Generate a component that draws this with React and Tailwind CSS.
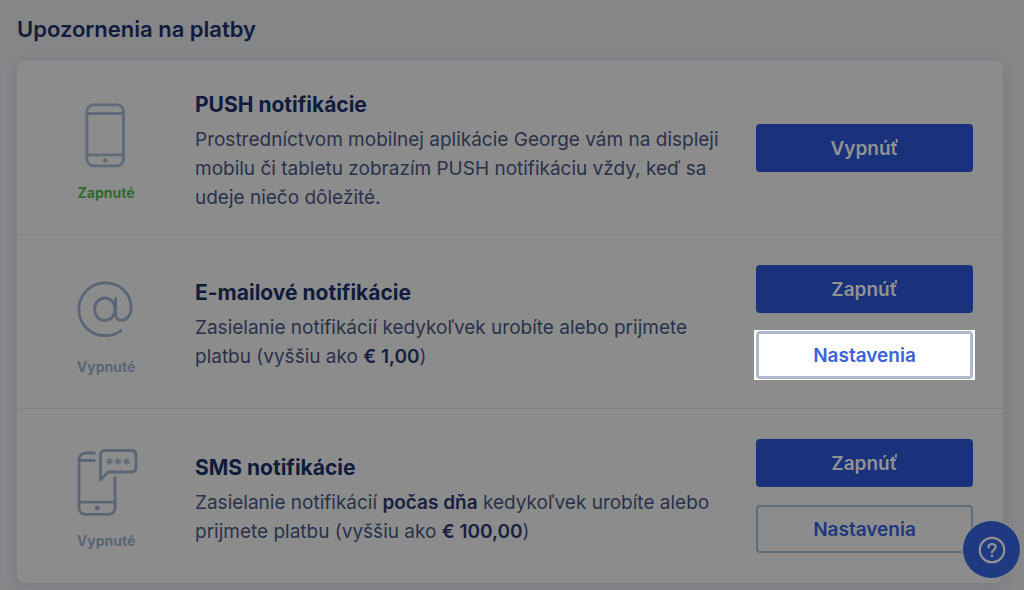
import React from "react";

function PhoneIcon() {
  return (
    <svg viewBox="0 0 64 68" className="h-[68px] w-16" fill="none" stroke="#5f6b7a" strokeWidth="2.8" aria-hidden="true">
      <rect x="13" y="3.8" width="36.500" height="61" rx="6.5" />
      <path d="M13 12.500h36.500M13 53.800h36.500" />
      <circle cx="31.300" cy="59.300" r="2.3" fill="#5f6b7a" stroke="none" />
    </svg>
  );
}

function AtIcon() {
  return (
    <svg viewBox="0 0 64 68" className="h-[68px] w-16" fill="none" stroke="#5a6675" strokeWidth="2.8" strokeLinecap="round" aria-hidden="true">
      <ellipse cx="30.8" cy="34.300" rx="10.3" ry="11.3" />
      <path d="M41.6 23.500v15.500c0 4.200 2.200 6.200 5.800 6.200 6 0 9.700-5.500 9.700-12.200C57.100 18 45.500 7.900 31.300 7.900 16.300 7.900 4.900 19.600 4.900 34.500S16.300 60.600 31.300 60.600c6 0 11.200-1.600 15.700-5" />
    </svg>
  );
}

function SmsIcon() {
  return (
    <svg viewBox="0 0 64 68" className="h-[68px] w-16" fill="none" stroke="#5a6675" strokeWidth="2.8" aria-hidden="true">
      <path d="M21.500 4H12c-4.200 0-7 2.800-7 7v48c0 4 2.800 6.300 7 6.300h22c4.200 0 7-2.300 7-6.300V27.500" />
      <path d="M5 11.500h16.500M5 53.200h36" />
      <circle cx="23.300" cy="59" r="2.400" fill="#5a6675" stroke="none" />
      <path d="M30.500 1.500h27c2.800 0 4.500 1.700 4.500 4.500v12.500c0 2.800-1.700 4.500-4.500 4.500H34l-7.500 8V6c0-2.800 1.500-4.500 4-4.500z" strokeLinejoin="round" />
      <path
        d="M35.500 9v7M32.500 10.800l6 3.400M38.500 10.800l-6 3.400M44 9v7M41 10.800l6 3.400M47 10.800l-6 3.400M52.500 9v7M49.500 10.800l6 3.400M55.500 10.800l-6 3.400"
        strokeWidth="1.400"
      />
    </svg>
  );
}

function PrimaryButton({ children }) {
  return (
    <button type="button" className="h-12 w-full rounded bg-[#19327b] pt-[3px] text-[19px] font-semibold text-[#929292]">
      {children}
    </button>
  );
}

function SettingsButton({ highlighted }) {
  if (highlighted) {
    return (
      <div className="-mx-0.5 -my-px bg-white px-0.5 py-px">
        <button type="button" className="h-12 w-full rounded border-[3px] border-[#adb9cb] bg-white pt-[3px] text-[19px] font-semibold text-[#3a62dc]">
          Nastavenia
        </button>
      </div>
    );
  }
  return (
    <button type="button" className="h-12 w-full rounded border-2 border-[#606b7a] pt-[3px] text-[19px] font-semibold text-[#20377f]">
      Nastavenia
    </button>
  );
}

function NotificationRow({ icon, status, statusClass, title, children, actions }) {
  return (
    <li className="flex min-h-[174px] items-center pr-[30px]">
      <div className="flex w-[178px] shrink-0 flex-col items-center gap-3.5 pt-2">
        {icon}
        <span className={`text-sm leading-5 font-bold ${statusClass}`}>{status}</span>
      </div>
      <div className="min-w-0 flex-1 pt-[7px] pr-6">
        <h3 className="text-[21px] leading-7 font-bold text-[#101b3e]">{title}</h3>
        <p className="mt-1.5 text-[19px] leading-[29px] text-[#2a314a]">{children}</p>
      </div>
      <div className="flex w-[217px] shrink-0 flex-col gap-[18px]">{actions}</div>
    </li>
  );
}

export default function App() {
  return (
    <main className="min-h-screen bg-[#858688] pt-[13px] pr-[21px] pb-1.5 pl-[17px] font-['Inter','Liberation_Sans',sans-serif]">
      <h2 className="text-[22px] leading-8 font-semibold text-[#101b3e]">Upozornenia na platby</h2>
      <ul className="mt-4 divide-y divide-[#828384] rounded-lg bg-[#8c8c8c] shadow-[0_2px_12px_rgba(70,80,120,0.22)]">
        <NotificationRow
          icon={<PhoneIcon />}
          status="Zapnuté"
          statusClass="text-[#2f6a2c]"
          title="PUSH notifikácie"
          actions={<PrimaryButton>Vypnúť</PrimaryButton>}
        >
          Prostredníctvom mobilnej aplikácie George vám na displeji mobilu či tabletu zobrazím PUSH notifikáciu vždy, keď sa udeje niečo dôležité.
        </NotificationRow>
        <NotificationRow
          icon={<AtIcon />}
          status="Vypnuté"
          statusClass="text-[#5a6675]"
          title="E-mailové notifikácie"
          actions={
            <>
              <PrimaryButton>Zapnúť</PrimaryButton>
              <SettingsButton highlighted />
            </>
          }
        >
          Zasielanie notifikácií kedykoľvek urobíte alebo prijmete platbu (vyššiu ako <strong className="font-semibold text-[#17203f]">€ 1,00</strong>)
        </NotificationRow>
        <NotificationRow
          icon={<SmsIcon />}
          status="Vypnuté"
          statusClass="text-[#5a6675]"
          title="SMS notifikácie"
          actions={
            <>
              <PrimaryButton>Zapnúť</PrimaryButton>
              <SettingsButton />
            </>
          }
        >
          Zasielanie notifikácií <strong className="font-semibold text-[#17203f]">počas dňa</strong> kedykoľvek urobíte alebo prijmete platbu (vyššiu ako <strong className="font-semibold text-[#17203f]">€ 100,00</strong>)
        </NotificationRow>
      </ul>
      <button
        type="button"
        aria-label="Pomoc"
        className="fixed right-1 bottom-3 flex size-[57px] items-center justify-center rounded-full bg-[#203a82] ring-1 ring-[#8c8c8c]"
      >
        <svg viewBox="0 0 28 28" className="size-7" fill="none" stroke="#929292" strokeWidth="2.200" strokeLinecap="round" aria-hidden="true">
          <circle cx="14" cy="14" r="12.200" />
          <path d="M10.500 11.500c0-2.200 1.500-3.500 3.500-3.500s3.600 1.300 3.600 3.200c0 2.600-3.600 2.600-3.600 5.300" />
          <circle cx="14" cy="20" r="1.300" fill="#929292" stroke="none" />
        </svg>
      </button>
    </main>
  );
}
